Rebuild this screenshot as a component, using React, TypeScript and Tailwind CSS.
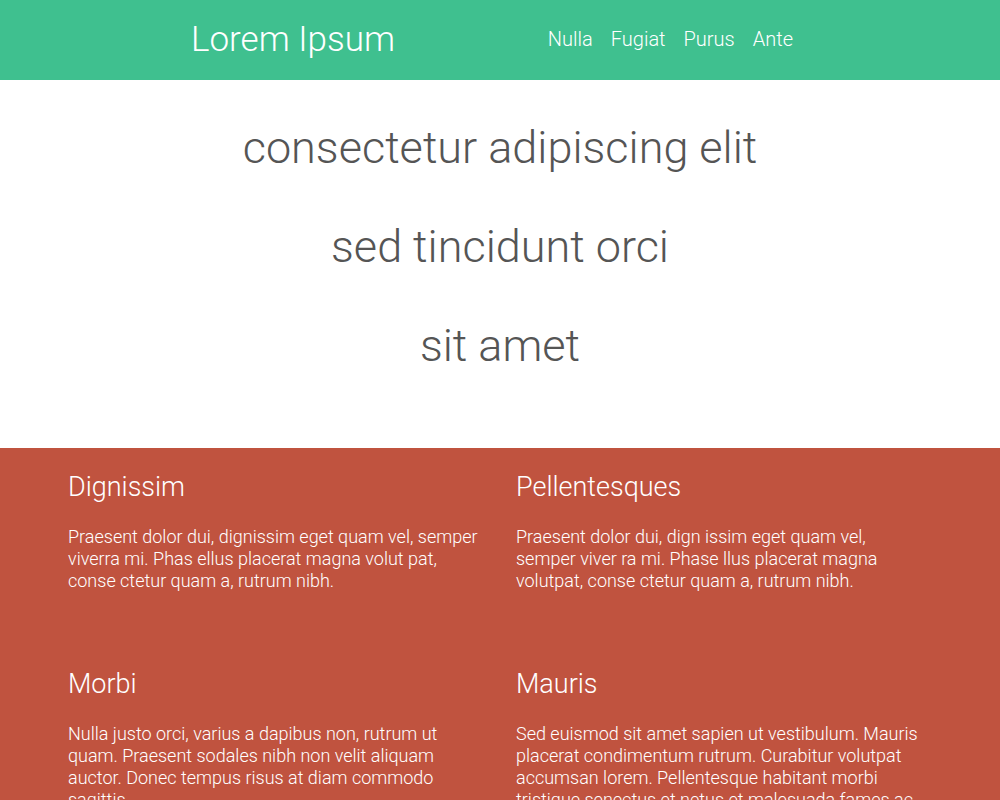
import React from "react";

const cols = [
  {
    h: "Dignissim",
    p: "Praesent dolor dui, dignissim eget quam vel, semper viverra mi. Phas ellus placerat magna volut pat, conse ctetur quam a, rutrum nibh.",
  },
  {
    h: "Pellentesques",
    p: "Praesent dolor dui, dign issim eget quam vel, semper viver ra mi. Phase llus placerat magna volutpat, conse ctetur quam a, rutrum nibh.",
  },
  {
    h: "Morbi",
    p: "Nulla justo orci, varius a dapibus non, rutrum ut quam. Praesent sodales nibh non velit aliquam auctor. Donec tempus risus at diam commodo sagittis.",
  },
  {
    h: "Mauris",
    p: "Sed euismod sit amet sapien ut vestibulum. Mauris placerat condimentum rutrum. Curabitur volutpat accumsan lorem. Pellentesque habitant morbi tristique senectus et netus et malesuada fames ac turpis egestas.",
  },
];

export default function App() {
  return (
    <div className="w-[1000px] font-['Roboto',sans-serif] font-light">
      <header className="h-[80px] bg-[#3fc08f] text-white flex items-center pb-[2px]">
        <div className="w-[620px] mx-auto flex items-center justify-between">
          <div className="text-[35px] leading-none pl-[1px]">Lorem Ipsum</div>
          <nav className="flex gap-[18px] text-[20px] pr-[17px]">
            <span>Nulla</span>
            <span>Fugiat</span>
            <span>Purus</span>
            <span>Ante</span>
          </nav>
        </div>
      </header>
      <section className="h-[368px] bg-white text-[#555] text-center text-[45px] leading-none pt-[42px] flex flex-col gap-[47px]">
        <div className="h-[52px] leading-[52px]">consectetur adipiscing elit</div>
        <div className="h-[52px] leading-[52px]">sed tincidunt orci</div>
        <div className="h-[52px] leading-[52px]">sit amet</div>
      </section>
      <section className="bg-[#c0533f] text-white">
        <div className="w-[864px] mx-auto grid grid-cols-[412px_412px] gap-x-[36px] gap-y-[76px] pt-[23px] pb-[40px]">
          {cols.map((c) => (
            <div key={c.h}>
              <h2 className="text-[27px] leading-[32px] mb-[23px]">{c.h}</h2>
              <p className="text-[18px] leading-[22px]">{c.p}</p>
            </div>
          ))}
        </div>
      </section>
    </div>
  );
}
